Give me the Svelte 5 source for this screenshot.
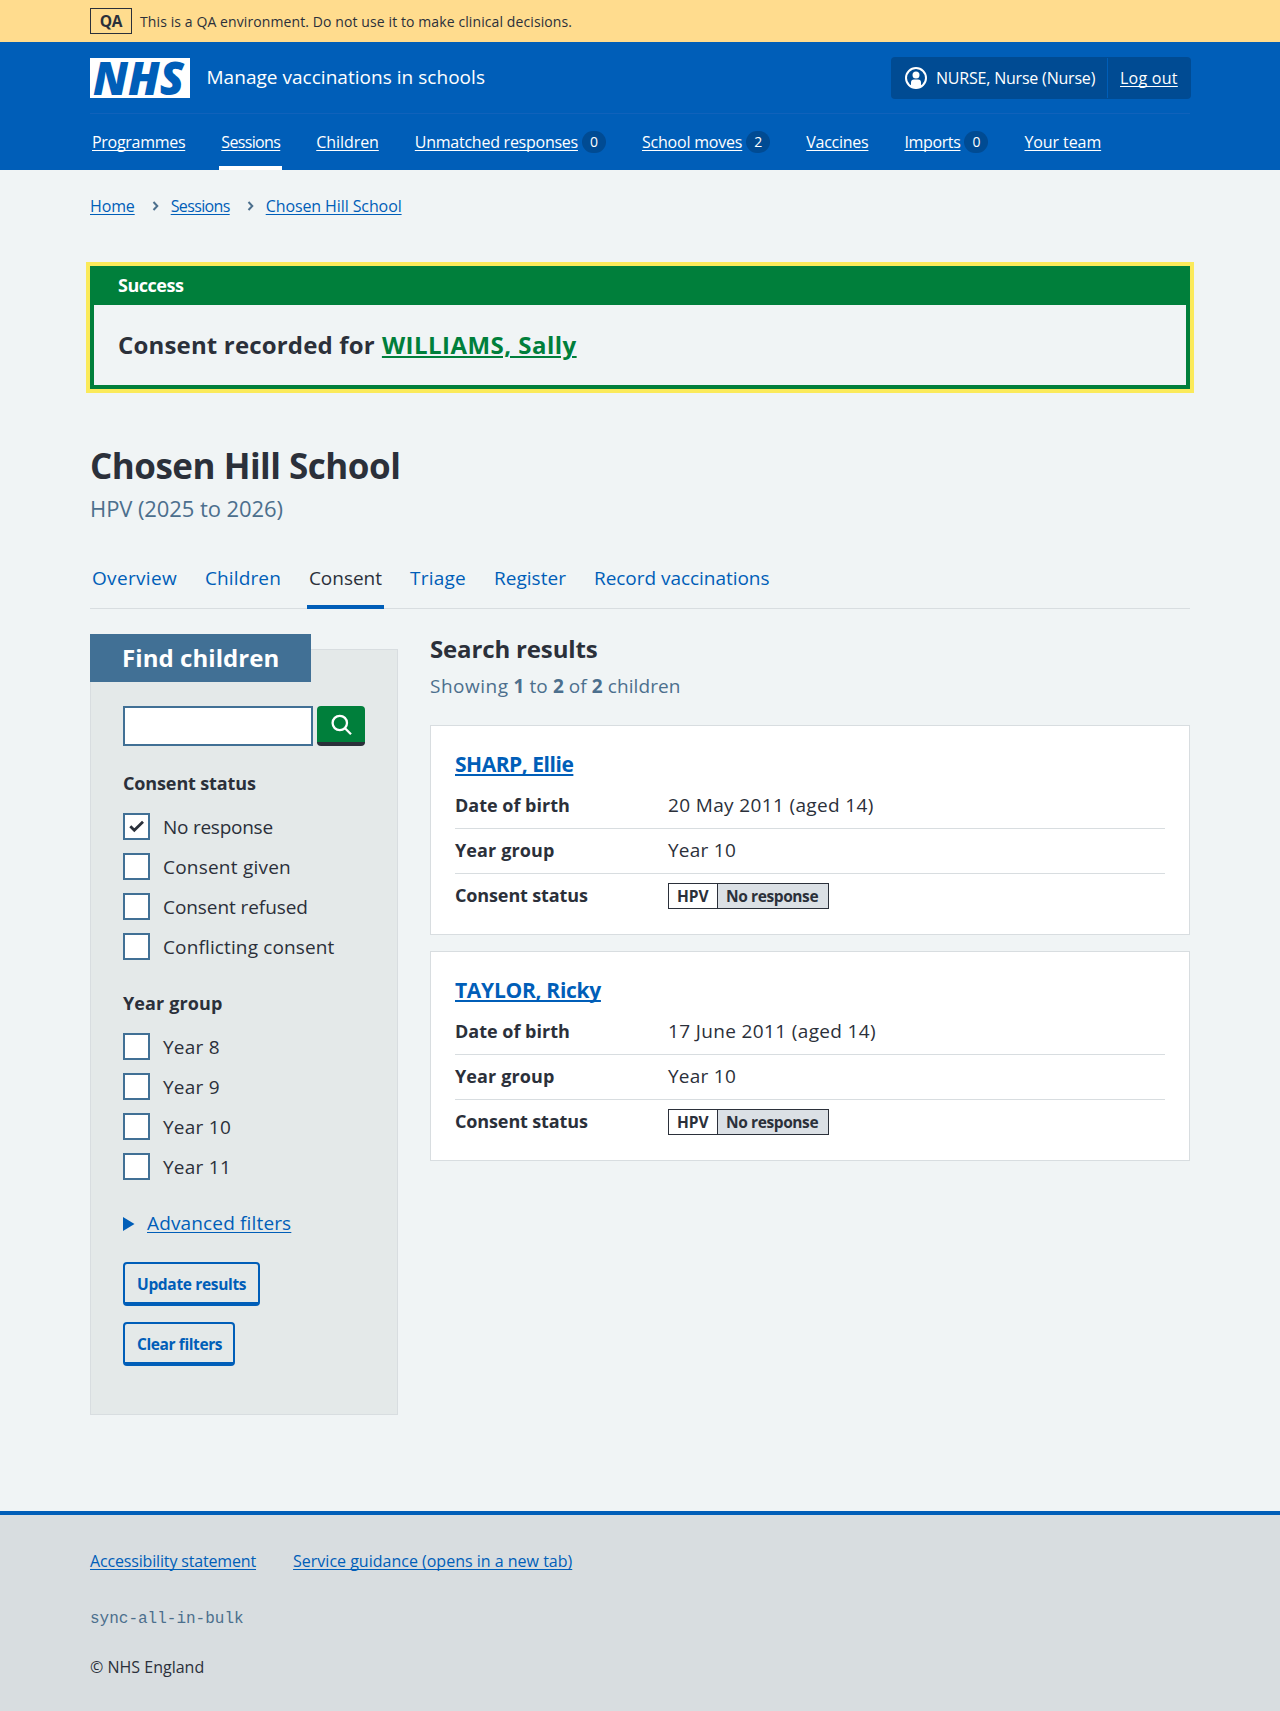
<script>
  // `track` is the letter spacing of an item, in pixels
  const nav = [
    { label: 'Programmes', track: -0.29 },
    { label: 'Sessions', track: -0.64, current: true },
    { label: 'Children', track: -0.07 },
    { label: 'Unmatched responses', track: -0.25, count: 0 },
    { label: 'School moves', track: -0.2, count: 2 },
    { label: 'Vaccines', track: -0.26 },
    { label: 'Imports', track: -0.36, count: 0 },
    { label: 'Your team', track: -0.09 }
  ];
  const crumbs = [
    { label: 'Home', track: -0.13 },
    { label: 'Sessions', track: -0.64 },
    { label: 'Chosen Hill School', track: -0.1 }
  ];
  const tabs = [
    { label: 'Overview', track: 0.32 },
    { label: 'Children', track: 0.13 },
    { label: 'Consent', track: -0.02, current: true },
    { label: 'Triage', track: 0.23 },
    { label: 'Register', track: 0.03 },
    { label: 'Record vaccinations', track: -0.04 }
  ];
  const groups = [
    {
      legend: 'Consent status',
      track: -0.13,
      options: [
        { label: 'No response', track: -0.25, checked: true },
        { label: 'Consent given', track: 0.22 },
        { label: 'Consent refused', track: -0.07 },
        { label: 'Conflicting consent', track: 0.13 }
      ]
    },
    {
      legend: 'Year group',
      track: 0.12,
      options: [
        { label: 'Year 8', track: 0.25 },
        { label: 'Year 9', track: 0.25 },
        { label: 'Year 10', track: 0.25 },
        { label: 'Year 11', track: 0.25 }
      ]
    }
  ];
  const children = [
    { name: 'SHARP, Ellie', track: -0.47, dob: '20 May 2011 (aged 14)' },
    { name: 'TAYLOR, Ricky', track: -0.29, dob: '17 June 2011 (aged 14)' }
  ];
</script>

<div class="environment">
  <div class="container">
    <strong>QA</strong>
    <span>This is a QA environment. Do not use it to make clinical decisions.</span>
  </div>
</div>

<header>
  <div class="container">
    <div class="masthead">
      <svg class="logo" width="100" height="40" viewBox="0 0 100 40">
        <rect width="100" height="40" fill="#fff" />
        <text x="3" y="36.500" textLength="91" lengthAdjust="spacingAndGlyphs">NHS</text>
      </svg>
      <span class="service">Manage vaccinations in schools</span>
      <div class="account">
        <span class="user">
          <svg width="22" height="22" viewBox="0 0 22 22">
            <circle cx="11" cy="11" r="10" fill="none" stroke="#fff" stroke-width="2" />
            <circle cx="11" cy="8" r="3.5" fill="#fff" />
            <path d="M6 20v-4.500a3 3 0 0 1 3-3h4a3 3 0 0 1 3 3V20l-5 1.500z" fill="#fff" />
          </svg>
          <span class="username">NURSE, Nurse (Nurse)</span>
        </span>
        <a class="logout" href="#logout">Log out</a>
      </div>
    </div>
    <nav class="primary">
      {#each nav as item}
        <span class="nav-item" class:current={item.current}>
          <a href="#nav" style:letter-spacing="{item.track}px">{item.label}</a>
          {#if item.count !== undefined}<span class="count">{item.count}</span>{/if}
        </span>
      {/each}
    </nav>
  </div>
</header>

<main class="container">
  <nav class="crumbs">
    {#each crumbs as crumb, i}
      {#if i > 0}
        <svg width="8" height="12" viewBox="0 0 8 12"><path d="M1.500 2l3.800 4-3.800 4" /></svg>
      {/if}
      <a href="#crumb" style:letter-spacing="{crumb.track}px">{crumb.label}</a>
    {/each}
  </nav>

  <section class="notice">
    <h2>Success</h2>
    <p>
      <span class="message">Consent recorded for</span>
      <a href="#child">WILLIAMS, Sally</a>
    </p>
  </section>

  <h1>Chosen Hill School</h1>
  <p class="caption">HPV (2025 to 2026)</p>

  <nav class="tabs">
    {#each tabs as tab}
      <a href="#tab" class:current={tab.current} style:letter-spacing="{tab.track}px">{tab.label}</a>
    {/each}
  </nav>

  <div class="columns">
    <aside>
      <h2>Find children</h2>
      <div class="search">
        <input type="text" aria-label="Search" />
        <button class="go" aria-label="Search">
          <svg width="24" height="24" viewBox="0 0 24 24">
            <circle cx="10.800" cy="11" r="7.200" />
            <path d="M16 16.200l6 6" />
          </svg>
        </button>
      </div>

      {#each groups as group}
        <div class="group">
          <h3 style:letter-spacing="{group.track}px">{group.legend}</h3>
          {#each group.options as option}
            <div class="option">
              <span class="box">
                {#if option.checked}
                  <svg width="23" height="23" viewBox="0 0 23 23"><path d="M5.300 11.300l4 4 8.700-8.500" /></svg>
                {/if}
              </span>
              <span class="label" style:letter-spacing="{option.track}px">{option.label}</span>
            </div>
          {/each}
        </div>
      {/each}

      <div class="advanced">
        <svg width="12" height="14" viewBox="0 0 12 14"><path d="M0 0l11.500 7L0 14z" fill="#005eb8" /></svg>
        <a href="#advanced">Advanced filters</a>
      </div>
      <button class="secondary update">Update results</button>
      <button class="secondary clear">Clear filters</button>
    </aside>

    <section class="results">
      <h2>Search results</h2>
      <p class="showing"><span class="wide">Showing</span> <b>1</b> to <b>2</b> of <b>2</b> children</p>
      {#each children as child}
        <article>
          <h3><a href="#child" style:letter-spacing="{child.track}px">{child.name}</a></h3>
          <dl>
            <div>
              <dt class="dob">Date of birth</dt>
              <dd class="date">{child.dob}</dd>
            </div>
            <div>
              <dt>Year group</dt>
              <dd class="year">Year 10</dd>
            </div>
            <div>
              <dt class="status">Consent status</dt>
              <dd class="tag"><span class="programme">HPV</span><span class="state">No response</span></dd>
            </div>
          </dl>
        </article>
      {/each}
    </section>
  </div>
</main>

<footer>
  <div class="container">
    <div class="links">
      <a class="accessibility" href="#accessibility">Accessibility statement</a>
      <a href="#guidance">Service guidance (opens in a new tab)</a>
    </div>
    <code>sync-all-in-bulk</code>
    <p>© NHS England</p>
  </div>
</footer>

<style>
  :global(body) {
    background: #f0f4f5;
    color: #2b303a;
    font: 19px/28px "Open Sans", "Noto Sans", sans-serif;
  }
  :global(*) { box-sizing: border-box; }
  h1, h2, h3, p, dl, dd { margin: 0; font-weight: 700; }
  p, dd { font-weight: 400; }
  svg { display: block; flex: none; }
  button { font-family: inherit; margin: 0; padding: 0; }
  span, a, b, dt, strong { white-space: nowrap; }
  a {
    color: #005eb8;
    text-decoration: underline;
    text-decoration-thickness: 1px;
    text-underline-offset: 2px;
    text-decoration-skip-ink: none;
  }
  .container { width: 1100px; margin: 0 auto; }

  .environment { height: 42px; background: #ffdc8e; font-size: 14px; }
  .environment .container { height: 100%; display: flex; align-items: center; gap: 8px; letter-spacing: 0.1px; }
  .environment span { padding-top: 2px; }
  .environment strong {
    width: 42px;
    height: 26px;
    border: 1px solid #2b303a;
    font-size: 15.5px;
    font-weight: 700;
    line-height: 24px;
    text-align: center;
    letter-spacing: -0.2px;
  }

  header { height: 128px; background: #005eb8; color: #fff; font-size: 16px; }
  header a { color: #fff; }
  .masthead {
    height: 72px;
    display: flex;
    align-items: center;
    border-bottom: 1px solid #1062bb;
  }
  .logo { overflow: visible; }
  .logo text { font: italic 800 46px "Open Sans", sans-serif; fill: #005eb8; }
  .service { margin-left: 16.5px; padding-bottom: 2px; font-size: 19px; letter-spacing: 0.03px; }
  .account {
    width: 300px;
    height: 42px;
    margin: 0 -1px 0 auto;
    display: flex;
    border-radius: 4px;
    background: #004b93;
  }
  .user {
    width: 217px;
    margin: 1px 0;
    padding-left: 14px;
    display: flex;
    align-items: center;
    gap: 9px;
    border-right: 1px solid #005eb8;
  }
  .username { letter-spacing: -0.2px; }
  .logout { padding-left: 12px; line-height: 42px; letter-spacing: 0.26px; }
  .primary { height: 56px; display: flex; gap: 32px; }
  .nav-item {
    padding: 4px 2px 0;
    display: flex;
    align-items: center;
    gap: 4px;
    border-bottom: 4px solid transparent;
    line-height: 24px;
  }
  .nav-item.current { border-color: #fff; }
  .count {
    width: 24px;
    height: 22px;
    border-radius: 12px;
    background: #004b93;
    font-size: 14px;
    line-height: 22px;
    text-align: center;
  }

  .crumbs { height: 48px; padding-top: 24px; display: flex; align-items: center; font-size: 16px; line-height: 24px; }
  .crumbs svg { margin: 0 11px 0 17px; }
  .crumbs path { fill: none; stroke: #4c6f8d; stroke-width: 2; }

  .notice {
    height: 123px;
    margin-top: 48px;
    border: 4px solid #007f3b;
    outline: 4px solid #fbea5a;
  }
  .notice h2 {
    height: 35px;
    padding-left: 24px;
    background: #007f3b;
    color: #fff;
    font-size: 18px;
    line-height: 31px;
    letter-spacing: -0.48px;
  }
  .notice p { padding: 24px 0 0 24px; font-size: 24px; font-weight: 700; line-height: 32px; display: flex; gap: 7px; }
  .message { letter-spacing: 0.17px; }
  .notice a { color: #007f3b; letter-spacing: 0.47px; text-decoration-thickness: 2px; text-decoration-skip-ink: auto; }

  h1 { margin-top: 54px; font-size: 35px; line-height: 45px; letter-spacing: -0.5px; }
  .caption { margin-top: 4px; color: #4c6f8d; font-size: 22px; line-height: 32px; letter-spacing: -0.08px; }

  .tabs { height: 62px; margin-top: 23px; display: flex; gap: 24px; box-shadow: inset 0 -1px #d8dde0; }
  .tabs a { padding: 17px 2px 0; border-bottom: 4px solid transparent; text-decoration: none; }
  .tabs .current { border-color: #005eb8; color: #2b303a; }

  .columns { margin-top: 25px; display: grid; grid-template-columns: 308px 760px; gap: 32px; align-items: start; }
  aside {
    height: 766px;
    margin-top: 15px;
    padding: 0 32px;
    border: 1px solid #d8dde0;
    background: #e4e9e9;
  }
  aside h2 {
    width: 221px;
    height: 48px;
    margin: -16px 0 24px -33px;
    padding: 8px 32px;
    background: #417095;
    color: #fff;
    font-size: 24px;
    line-height: 32px;
    letter-spacing: 0.07px;
    white-space: nowrap;
  }
  .search { display: flex; gap: 4px; }
  input { width: 190px; height: 40px; border: 2px solid #417095; border-radius: 0; background: #fff; }
  .go {
    width: 48px;
    height: 40px;
    display: flex;
    justify-content: center;
    align-items: center;
    border: 0;
    border-bottom: 4px solid #2b303a;
    border-radius: 4px;
    background: #007f3b;
  }
  .go svg { fill: none; stroke: #fff; stroke-width: 2.300; }
  .group { margin-top: 22px; }
  .group h3 { margin-bottom: 10px; padding-top: 1px; font-size: 18px; line-height: 27px; position: relative; top: 1px; }
  .option { height: 40px; display: flex; align-items: center; gap: 13px; }
  .label { padding-top: 2px; }
  .box { width: 27px; height: 27px; border: 2px solid #417095; background: #fff; }
  .box path { fill: none; stroke: #2b303a; stroke-width: 2.800; }
  .advanced { height: 28px; margin: 22px 0 26px; display: flex; align-items: center; gap: 12px; letter-spacing: 0.15px; }
  .advanced svg { margin-top: 4px; }
  .advanced a { padding-top: 2px; }
  .secondary {
    height: 44px;
    display: block;
    padding: 2px 0 0 12px;
    border: 2px solid #005eb8;
    border-bottom-width: 4px;
    border-radius: 4px;
    background: transparent;
    color: #005eb8;
    font-size: 15.5px;
    font-weight: 700;
    text-align: left;
  }
  .update { width: 137px; margin-bottom: 16px; letter-spacing: -0.33px; }
  .clear { width: 112px; letter-spacing: -0.4px; }

  .results h2 { font-size: 24px; line-height: 29px; letter-spacing: -0.15px; }
  .showing { margin: 9px 0 25px; color: #4c6f8d; letter-spacing: 0.08px; }
  .showing b { font-weight: 700; }
  .wide { letter-spacing: 0.5px; }
  article { height: 210px; margin-bottom: 16px; padding: 23px 24px; border: 1px solid #d8dde0; background: #fff; }
  article h3 { font-size: 21px; line-height: 30px; }
  article h3 a { text-decoration-thickness: 2px; }
  dl { margin-top: 5px; }
  dl div { height: 45px; padding-top: 7px; display: grid; grid-template-columns: 213px 1fr; border-bottom: 1px solid #d8dde0; }
  dl div:last-child { height: 36px; border: 0; }
  dt { font-size: 18px; font-weight: 700; letter-spacing: 0.12px; }
  .dob { letter-spacing: 0; }
  .status { letter-spacing: -0.13px; }
  .date { letter-spacing: 0.36px; }
  .year { letter-spacing: 0.25px; }
  .tag {
    width: 161px;
    height: 26px;
    margin-top: 2px;
    display: flex;
    border: 1px solid #2b303a;
    font-size: 15.5px;
    font-weight: 700;
    line-height: 25px;
  }
  .programme { width: 48px; padding-left: 8px; letter-spacing: 0; }
  .state { flex: 1; padding-left: 8px; border-left: 1px solid #2b303a; background: #dbe0e5; letter-spacing: -0.4px; }

  footer {
    height: 200px;
    margin-top: 96px;
    padding-top: 34px;
    border-top: 4px solid #005eb8;
    background: #d8dde0;
    font-size: 16px;
    line-height: 24px;
  }
  .links { display: flex; gap: 37px; }
  .accessibility { letter-spacing: -0.16px; }
  code { margin: 34px 0 24px; display: block; color: #4c6f8d; font: 16px/24px "Liberation Mono", monospace; }
</style>
